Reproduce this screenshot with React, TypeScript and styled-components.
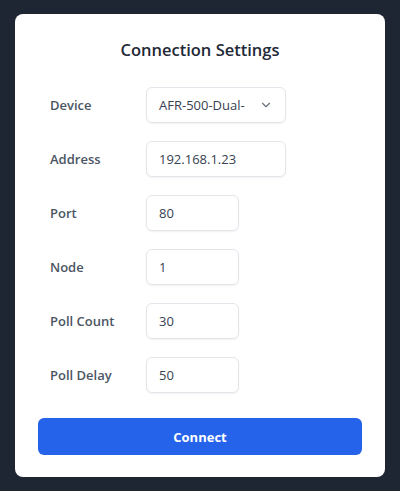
import styled, { createGlobalStyle } from "styled-components";

const GlobalStyle = createGlobalStyle`
  html, body {
    margin: 0;
    padding: 0;
    background: #1e2633;
  }
  body {
    font-family: "Open Sans", "Noto Sans", sans-serif;
  }
`;

interface FieldInterface {
  label: string;
  value: string;
  wide?: boolean;
  select?: boolean;
}

const fields: FieldInterface[] = [
  { label: "Device", value: "AFR-500-Dual-", wide: true, select: true },
  { label: "Address", value: "192.168.1.23", wide: true },
  { label: "Port", value: "80" },
  { label: "Node", value: "1" },
  { label: "Poll Count", value: "30" },
  { label: "Poll Delay", value: "50" },
];

const Chevron = () => (
  <svg width="14" height="14" viewBox="0 0 24 24" fill="none">
    <path
      d="M6 9l6 6 6-6"
      stroke="#6b7280"
      strokeWidth="2"
      strokeLinecap="round"
      strokeLinejoin="round"
    />
  </svg>
);

const App = () => {
  return (
    <>
      <GlobalStyle />
      <Page>
        <Card>
          <Title>Connection Settings</Title>
          <Form>
            {fields.map((f) => (
              <Row key={f.label}>
                <Label>{f.label}</Label>
                <Box wide={f.wide}>
                  <Value>{f.value}</Value>
                  {f.select && <Chevron />}
                </Box>
              </Row>
            ))}
          </Form>
          <Button>Connect</Button>
        </Card>
      </Page>
    </>
  );
};

export default App;

const Page = styled.div`
  padding: 14px 15px;
  min-height: 491px;
  box-sizing: border-box;
`;

const Card = styled.div`
  background: #ffffff;
  border-radius: 8px;
  padding: 24px 23px 22px 23px;
  display: flex;
  flex-direction: column;
`;

const Title = styled.h2`
  margin: 0;
  text-align: center;
  font-size: 16.5px;
  font-weight: 600;
  color: #1f2937;
  line-height: 24px;
`;

const Form = styled.div`
  margin-top: 25px;
  padding: 0 12px;
  display: flex;
  flex-direction: column;
  gap: 18px;
`;

const Row = styled.div`
  display: grid;
  grid-template-columns: 96px auto;
  align-items: center;
`;

const Label = styled.span`
  font-size: 13px;
  font-weight: 600;
  color: #4b5563;
`;

const Box = styled.div<{ wide?: boolean }>`
  width: ${(p) => (p.wide ? "140px" : "93px")};
  height: 36px;
  box-sizing: border-box;
  border: 1px solid #e2e5ea;
  border-radius: 6px;
  box-shadow: 0 1px 2px rgba(0, 0, 0, 0.06);
  display: flex;
  align-items: center;
  justify-content: space-between;
  padding: 0 12px 0 12px;
`;

const Value = styled.span`
  font-size: 13px;
  color: #374151;
`;

const Button = styled.button`
  margin-top: 25px;
  height: 37px;
  border: none;
  border-radius: 6px;
  background: #2563eb;
  color: #ffffff;
  font-family: inherit;
  font-size: 13px;
  font-weight: 700;
`;
